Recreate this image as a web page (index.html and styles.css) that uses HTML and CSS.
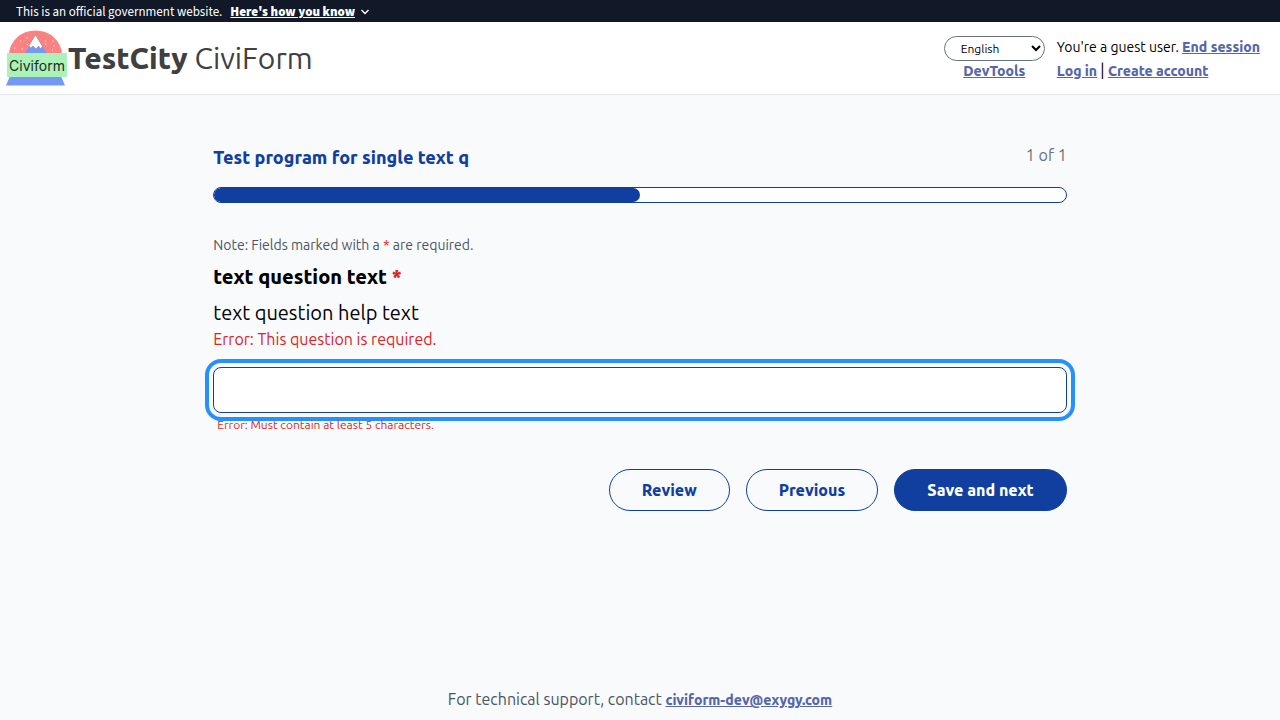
FILE: index.html
```html
<!DOCTYPE html>
<html lang="en">
<head>
<meta charset="utf-8">
<meta name="viewport" content="width=device-width, initial-scale=1">
<title>Test program for single text q</title>
<link rel="stylesheet" href="styles.css">
</head>
<body>
<div class="banner">
  <span>This is an official government website.</span>
  <button class="banner-toggle" type="button"><span class="banner-label">Here's how you know</span>
    <svg class="chevron" viewBox="0 0 8 6" aria-hidden="true"><path d="M.5 1L4 4.500 7.500 1" fill="none" stroke="currentColor" stroke-width="1.400"/></svg>
  </button>
</div>
<header class="header">
  <div class="brand">
    <svg class="logo" viewBox="0 0 62 56" role="img" aria-label="Civiform logo">
      <path d="M3 25a26.500 24.500 0 0 1 53 0z" fill="#fc8181"/>
      <path d="M18 25L29.500 5 42 25z" fill="#7498f4"/>
      <path d="M29.500 5L23 15.500l1.500 2.500 2.500-2 3 3 2.500-3 2 2.500 2-2z" fill="#fff" stroke="#777" stroke-width=".4"/>
      <path d="M8 18h1.200m5-7h1.200m5-3h1.200m-6 11h1.200m4-4.500h1.200M39 11h1.200m6 0h1.200m0 5h1.200m5 0h1.200m-9 4h1.200m-8-6h1.200" stroke="#fff" stroke-width="1.200"/>
      <path d="M4 46h51l4 9.500H0z" fill="#7498f4"/>
      <path d="M1 23h60v24H1z" fill="#aaf2b8"/>
      <text class="logo-text" x="31" y="41" text-anchor="middle">Civiform</text>
    </svg>
    <div class="brand-name"><b>TestCity</b> CiviForm</div>
  </div>
  <div class="account">
    <div class="tools">
      <select class="language" aria-label="Language"><option>English</option><option>Español</option></select>
      <a href="#">DevTools</a>
    </div>
    <div class="session">
      <div>You're a guest user. <a href="#">End session</a></div>
      <div><a href="#">Log in</a> <span class="divider">|</span> <a href="#">Create account</a></div>
    </div>
  </div>
</header>
<main class="main">
  <div class="program-head">
    <h1 class="program-title">Test program for single text q</h1>
    <span class="step">1 of 1</span>
  </div>
  <div class="progress"><div class="progress-fill" style="width:50%"></div></div>
  <form class="form">
    <p class="note">Note: Fields marked with a <span class="required">*</span> are required.</p>
    <label class="question" for="answer">text question text <span class="required">*</span></label>
    <p class="help">text question help text</p>
    <p class="error">Error: This question is required.</p>
    <input class="answer" id="answer" type="text">
    <p class="field-error">Error: Must contain at least 5 characters.</p>
    <div class="actions">
      <button class="button" type="button">Review</button>
      <button class="button" type="button">Previous</button>
      <button class="button button-primary" type="button">Save and next</button>
    </div>
  </form>
</main>
<footer class="footer">For technical support, contact <a href="#">civiform-dev@exygy.com</a></footer>
</body>
</html>
```
FILE: styles.css
```css
* { box-sizing: border-box; }
body {
  margin: 0;
  min-height: 100vh;
  display: flex;
  flex-direction: column;
  background: #f8fafc;
  color: #000;
  font: 16px/24px Ubuntu, "Open Sans", sans-serif;
}
p, h1 { margin: 0; }
button, input, select { font-family: inherit; font-weight: inherit; }
a { color: #5566aa; font-size: 14px; font-weight: 800; }
b { font-weight: 800; }
.banner {
  display: flex;
  gap: 8px;
  height: 22px;
  padding: 0 16px;
  background: #111827;
  color: #fff;
  font: 13px/24px "Source Sans 3", "Noto Sans CJK JP", sans-serif;
}
.banner-toggle {
  display: flex;
  align-items: center;
  gap: 6px;
  height: 24px;
  padding: 0;
  border: 0;
  background: none;
  color: inherit;
  font: inherit;
  font-weight: 900;
}
.banner-label { text-decoration: underline; }
.chevron { width: 8px; height: 6px; }
.header {
  display: flex;
  justify-content: space-between;
  align-items: center;
  padding: 8px 20px 8px 6px;
  border-bottom: 1px solid #e5e7eb;
  background: #fff;
}
.brand { display: flex; align-items: center; }
.logo { width: 62px; height: 56px; }
.logo-text { font: 14px Inter, sans-serif; fill: #1d2b22; }
.brand-name { color: #404040; font-size: 30px; line-height: 36px; }
.account { display: flex; gap: 12px; font-size: 14px; }
.tools { display: flex; flex-direction: column; align-items: center; }
.language {
  width: 101px;
  height: 25px;
  margin-top: 2px;
  padding: 0 0 0 12px;
  border: 1px solid #6b7280;
  border-radius: 16px;
  background: #fff;
  color: #000;
  font-size: 12px;
}
.tools a { line-height: 20px; }
.session { padding-top: 1px; }
.divider { font-size: 16px; line-height: 20px; }
.main { width: 66.67%; margin: 0 auto; padding-top: 48px; flex: 1; }
.program-head { display: flex; justify-content: space-between; }
.program-title { color: #113f9f; font-size: 18px; font-weight: 800; line-height: 28px; }
.step { color: #6b7280; }
.progress {
  height: 16px;
  margin-top: 16px;
  border: 1px solid #113f9f;
  border-radius: 8px;
  overflow: hidden;
  background: #fff;
}
.progress-fill { height: 100%; border-radius: 0 8px 8px 0; background: #113f9f; }
.form { display: flex; flex-direction: column; margin-top: 32px; }
.note { color: #4b5563; font-size: 14px; line-height: 20px; }
.question { margin-top: 8px; font-size: 20px; font-weight: 800; line-height: 28px; }
.required { color: #dc2626; }
.help { margin-top: 8px; font-size: 20px; line-height: 28px; }
.error { color: #dc2626; }
.answer {
  width: 100%;
  height: 46px;
  margin-top: 16px;
  padding: 0 12px;
  border: 1px solid #113f9f;
  border-radius: 8px;
  outline: 4px solid #2491ff;
  outline-offset: 4px;
  background: #fff;
  font-size: 18px;
}
.field-error { margin: 4px 4px 0; color: #dc2626; font-size: 12px; line-height: 16px; }
.actions { display: flex; justify-content: flex-end; gap: 16px; margin-top: 36px; }
.button {
  padding: 8px 32px;
  border: 1px solid #113f9f;
  border-radius: 24px;
  background: transparent;
  color: #113f9f;
  font-size: 16px;
  font-weight: 800;
  line-height: 24px;
}
.button-primary { background: #113f9f; color: #fff; }
.footer { padding: 8px; color: #4b5563; text-align: center; }
```
